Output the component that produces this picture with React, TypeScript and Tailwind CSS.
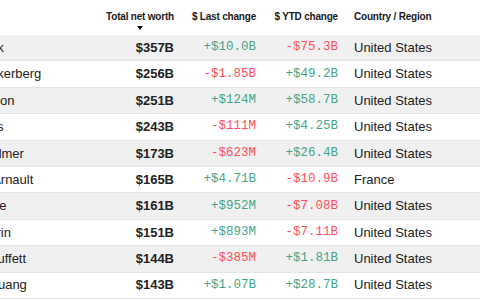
import React from "react";

type Row = { name: string; worth: string; last: string; ytd: string; country: string };

const rows: Row[] = [
  { name: "Elon Musk", worth: "$357B", last: "+$10.0B", ytd: "-$75.3B", country: "United States" },
  { name: "Mark Zuckerberg", worth: "$256B", last: "-$1.85B", ytd: "+$49.2B", country: "United States" },
  { name: "Larry Ellison", worth: "$251B", last: "+$124M", ytd: "+$58.7B", country: "United States" },
  { name: "Jeff Bezos", worth: "$243B", last: "-$111M", ytd: "+$4.25B", country: "United States" },
  { name: "Steve Ballmer", worth: "$173B", last: "-$623M", ytd: "+$26.4B", country: "United States" },
  { name: "Bernard Arnault", worth: "$165B", last: "+$4.71B", ytd: "-$10.9B", country: "France" },
  { name: "Larry Page", worth: "$161B", last: "+$952M", ytd: "-$7.08B", country: "United States" },
  { name: "Sergey Brin", worth: "$151B", last: "+$893M", ytd: "-$7.11B", country: "United States" },
  { name: "Warren Buffett", worth: "$144B", last: "-$385M", ytd: "+$1.81B", country: "United States" },
  { name: "Jensen Huang", worth: "$143B", last: "+$1.07B", ytd: "+$28.7B", country: "United States" },
];

function Change({ v }: { v: string }) {
  const pos = v.startsWith("+");
  return (
    <span className={pos ? "text-[#45a58a]" : "text-[#ff4f5b]"}>{v}</span>
  );
}

const mono = { fontFamily: "'Liberation Mono', 'DejaVu Sans Mono', monospace" };

export default function App() {
  return (
    <div className="w-[480px] h-[300px] overflow-hidden bg-white text-[#222]" style={{ fontFamily: "'Liberation Sans', Arial, sans-serif" }}>
      <div className="w-[537px] -ml-[57px]">
        <div className="flex h-[35px] items-start pt-[11px] text-[10px] font-bold tracking-[-0.2px] text-[#1a1a1a]">
          <div className="w-[157px]" />
          <div className="w-[74px] flex justify-end">
            <div className="flex flex-col items-center">
              <span className="leading-[12px]">Total net worth</span>
              <svg width="6" height="4" viewBox="0 0 6 4" className="mt-[3px]">
                <path d="M0 0 L6 0 L3 4 Z" fill="#111" />
              </svg>
            </div>
          </div>
          <div className="w-[82px] text-right leading-[12px]">$ Last change</div>
          <div className="w-[82px] text-right leading-[12px]">$ YTD change</div>
          <div className="pl-[16px] leading-[12px]">Country / Region</div>
        </div>
        {rows.map((r, i) => (
          <div
            key={r.name}
            className={`flex items-center h-[26.4px] border-b border-[#e4e4e4] text-[13px] ${i % 2 === 0 ? "bg-[#f0f0f0]" : "bg-white"}`}
          >
            <div className="w-[157px] whitespace-nowrap overflow-hidden">{r.name}</div>
            <div className="w-[74px] text-right font-bold">{r.worth}</div>
            <div className="w-[82px] text-right text-[12.5px]" style={mono}>
              <Change v={r.last} />
            </div>
            <div className="w-[82px] text-right text-[12.5px]" style={mono}>
              <Change v={r.ytd} />
            </div>
            <div className="pl-[16px] whitespace-nowrap">{r.country}</div>
          </div>
        ))}
      </div>
    </div>
  );
}
